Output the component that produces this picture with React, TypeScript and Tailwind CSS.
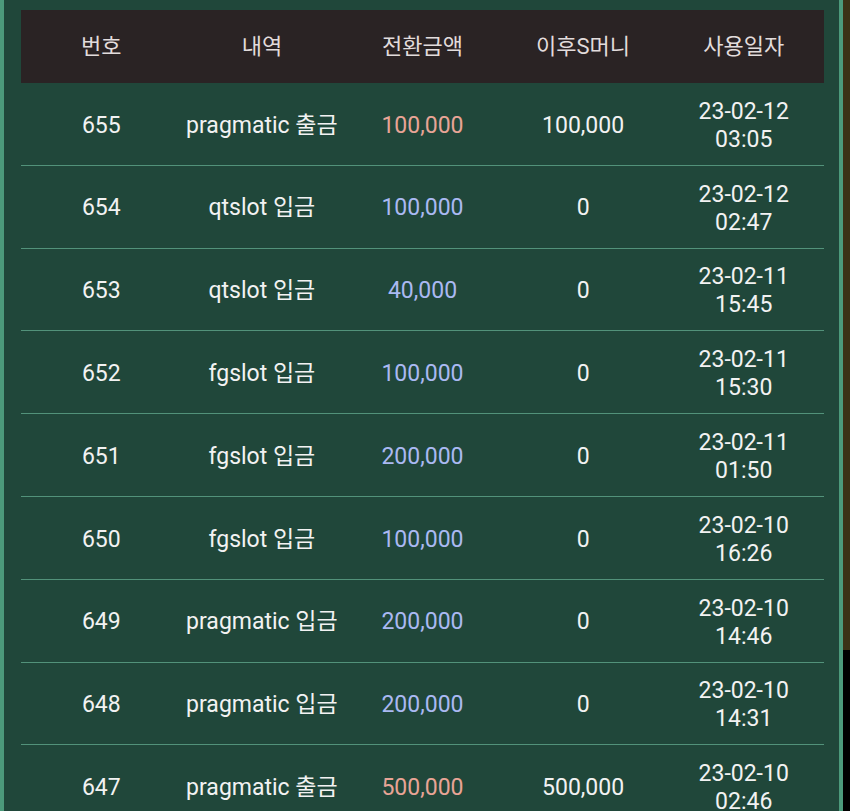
// S머니 사용내역 table
const rows = [
  { no: 655, desc: "pragmatic 출금", amount: "100,000", out: true, after: "100,000", date: "23-02-12", time: "03:05" },
  { no: 654, desc: "qtslot 입금", amount: "100,000", out: false, after: "0", date: "23-02-12", time: "02:47" },
  { no: 653, desc: "qtslot 입금", amount: "40,000", out: false, after: "0", date: "23-02-11", time: "15:45" },
  { no: 652, desc: "fgslot 입금", amount: "100,000", out: false, after: "0", date: "23-02-11", time: "15:30" },
  { no: 651, desc: "fgslot 입금", amount: "200,000", out: false, after: "0", date: "23-02-11", time: "01:50" },
  { no: 650, desc: "fgslot 입금", amount: "100,000", out: false, after: "0", date: "23-02-10", time: "16:26" },
  { no: 649, desc: "pragmatic 입금", amount: "200,000", out: false, after: "0", date: "23-02-10", time: "14:46" },
  { no: 648, desc: "pragmatic 입금", amount: "200,000", out: false, after: "0", date: "23-02-10", time: "14:31" },
  { no: 647, desc: "pragmatic 출금", amount: "500,000", out: true, after: "500,000", date: "23-02-10", time: "02:46" },
];

const headers = ["번호", "내역", "전환금액", "이후S머니", "사용일자"];

export default function App() {
  return (
    <div
      className="flex w-[850px] h-[811px] overflow-hidden bg-black"
      style={{ fontFamily: 'Roboto, "Noto Sans CJK KR", sans-serif' }}
    >
      <div className="flex-1 h-full bg-[#20473a] border-l-4 border-r-4 border-[#4c9a7b] pl-[17px] pr-[15px] pt-[10px]">
        {/* header */}
        <div className="grid grid-cols-5 h-[73px] items-center bg-[#2a2324] text-[#e2dcdc] text-[22px] text-center">
          {headers.map((h) => (
            <div key={h}>{h}</div>
          ))}
        </div>

        {/* rows */}
        {rows.map((r) => (
          <div
            key={r.no}
            className="grid grid-cols-5 h-[82.8px] pt-[4px] items-center border-b border-[#52927a] text-[23px] text-[#f2f2f2] text-center"
          >
            <div>{r.no}</div>
            <div>{r.desc}</div>
            <div className={r.out ? "text-[#e8a496]" : "text-[#aab9f2]"}>{r.amount}</div>
            <div>{r.after}</div>
            <div className="leading-[28px]">
              <div>{r.date}</div>
              <div>{r.time}</div>
            </div>
          </div>
        ))}
      </div>
      <div className="w-[7px] h-[650px] bg-[#3b3216]" />
    </div>
  );
}
